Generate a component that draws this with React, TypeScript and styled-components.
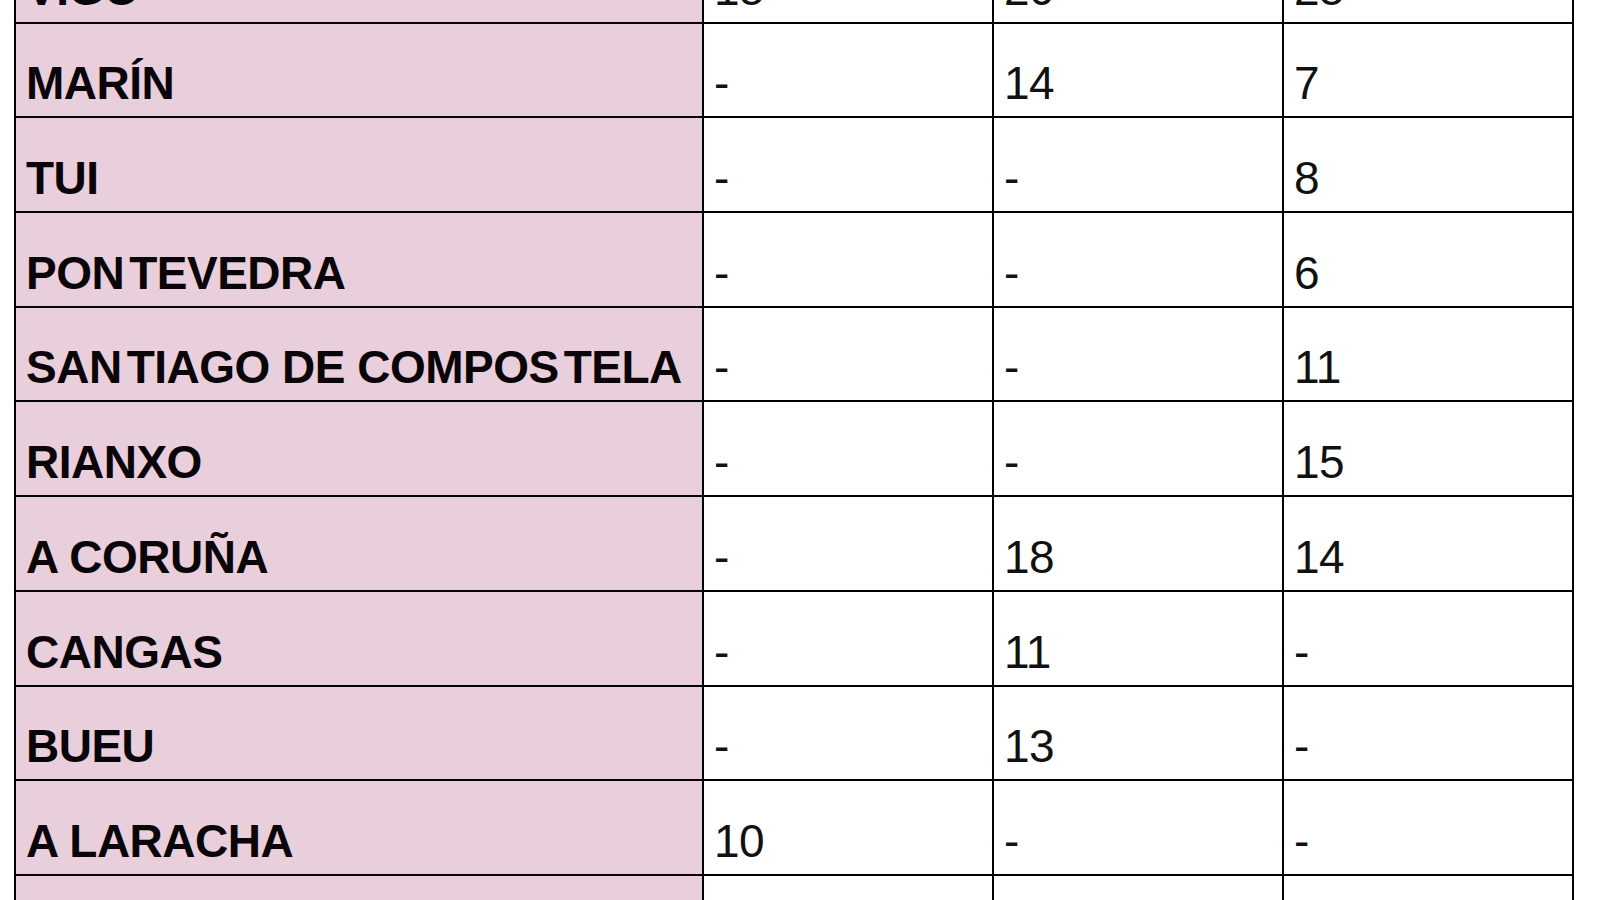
import { createGlobalStyle, styled } from "styled-components";
import { Fragment } from "react";

const GlobalStyle = createGlobalStyle`
  html, body {
    margin: 0;
    padding: 0;
    background: #ffffff;
    overflow: hidden;
  }
`;

const Page = styled.div`
  width: 1600px;
  height: 900px;
  overflow: hidden;
`;

const Table = styled.table`
  border-collapse: collapse;
  table-layout: fixed;
  width: 1558px;
  margin: -73px 0 0 14px;
  font-family: "Liberation Sans", Arial, sans-serif;
  color: #000;
`;

const Col = styled.col<{ $w: number }>`
  width: ${(p) => p.$w}px;
`;

const Row = styled.tr`
  height: 94.7px;
`;

const Cell = styled.td<{ $name?: boolean }>`
  border: 2px solid #000;
  padding: 0 0 10px 10px;
  vertical-align: bottom;
  white-space: nowrap;
  font-size: 46px;
  line-height: 46px;
  letter-spacing: -0.5px;
  font-weight: ${(p) => (p.$name ? 700 : 400)};
  background: ${(p) => (p.$name ? "#e9cedb" : "#ffffff")};
  color: ${(p) => (p.$name ? "#0a0508" : "#111")};
`;

// the scanned table has a loose kerning gap inside a few names
const Loose = styled.span`
  margin-right: 5px;
`;

const NameText = ({ text }: { text: string }) => {
  const parts = text.split("|");
  return (
    <>
      {parts.map((p, i) =>
        i < parts.length - 1 ? (
          <Loose key={i}>{p}</Loose>
        ) : (
          <Fragment key={i}>{p}</Fragment>
        )
      )}
    </>
  );
};

const rows: [string, string, string, string][] = [
  ["VIGO", "15", "20", "25"],
  ["MARÍN", "-", "14", "7"],
  ["TUI", "-", "-", "8"],
  ["PON|TEVEDRA", "-", "-", "6"],
  ["SAN|TIAGO DE COMPOS|TELA", "-", "-", "11"],
  ["RIANXO", "-", "-", "15"],
  ["A CORUÑA", "-", "18", "14"],
  ["CANGAS", "-", "11", "-"],
  ["BUEU", "-", "13", "-"],
  ["A LARACHA", "10", "-", "-"],
  ["", "", "", ""],
];

const App = () => {
  return (
    <Page>
      <GlobalStyle />
      <Table>
        <colgroup>
          <Col $w={688} />
          <Col $w={290} />
          <Col $w={290} />
          <Col $w={290} />
        </colgroup>
        <tbody>
          {rows.map((r, i) => (
            <Row key={`row-${i}`}>
              <Cell $name>
                <NameText text={r[0]} />
              </Cell>
              <Cell>{r[1]}</Cell>
              <Cell>{r[2]}</Cell>
              <Cell>{r[3]}</Cell>
            </Row>
          ))}
        </tbody>
      </Table>
    </Page>
  );
};

export default App;
